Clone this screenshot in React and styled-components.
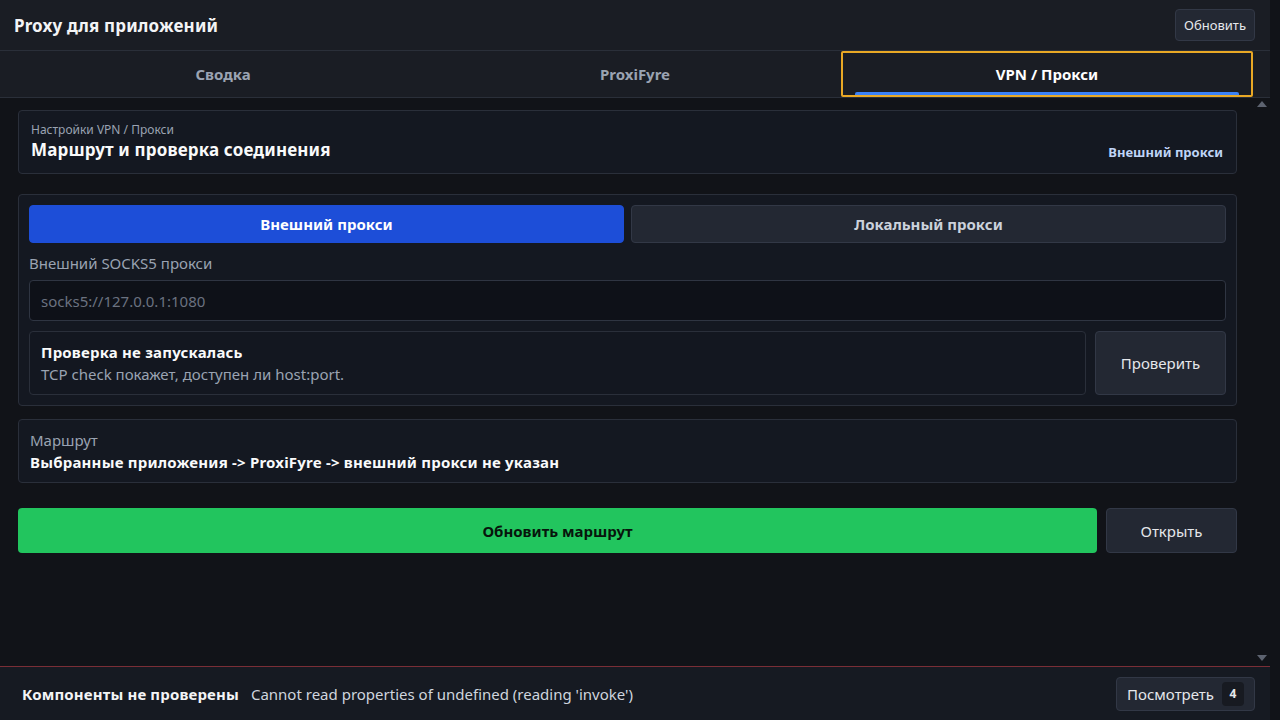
import React from 'react';
import styled, { createGlobalStyle } from 'styled-components';

const GlobalStyle = createGlobalStyle`
  html, body {
    margin: 0;
    padding: 0;
    background: #111318;
    font-family: "Noto Sans", "Open Sans", sans-serif;
    color: #e5e7eb;
  }
  * { box-sizing: border-box; }
`;

const Shell = styled.div`
  width: 1270px;
  height: 100vh;
  display: flex;
  flex-direction: column;
  background: #111318;
`;

const TopBar = styled.header`
  height: 51px;
  display: flex;
  align-items: center;
  justify-content: space-between;
  padding: 0 15px 0 14px;
  background: #1a1d24;
  border-bottom: 1px solid #2a2f39;
`;

const AppTitle = styled.h1`
  margin: 0;
  font-size: 17px;
  font-weight: 700;
  letter-spacing: 0.15px;
  color: #f3f4f6;
`;

const GhostButton = styled.button`
  font-family: inherit;
  font-size: ${(p) => p.$size || 15}px;
  color: #e5e7eb;
  background: #232833;
  border: 1px solid #323846;
  border-radius: 4px;
  height: ${(p) => p.$height || 32}px;
  width: ${(p) => (p.$width ? `${p.$width}px` : 'auto')};
  padding: 0 ${(p) => p.$padX || 10}px;
  display: inline-flex;
  align-items: center;
  justify-content: center;
  gap: 8px;
  flex-shrink: 0;
  cursor: pointer;
`;

const TabRow = styled.nav`
  height: 47px;
  display: grid;
  grid-template-columns: repeat(3, 1fr);
  padding: 0 17px;
  background: #1a1d24;
  border-bottom: 1px solid #2a2f39;
`;

const Tab = styled.button`
  position: relative;
  font-family: inherit;
  font-size: 15px;
  font-weight: 700;
  background: transparent;
  color: ${(p) => (p.$active ? '#ffffff' : '#9aa3b2')};
  border: 2px solid ${(p) => (p.$active ? '#e9a825' : 'transparent')};
  border-radius: 2px;
  cursor: pointer;

  &::after {
    content: '';
    display: ${(p) => (p.$active ? 'block' : 'none')};
    position: absolute;
    left: 12px;
    right: 12px;
    bottom: 0;
    height: 3px;
    background: #3b82f6;
    border-radius: 2px 2px 0 0;
  }
`;

const Body = styled.div`
  flex: 1;
  display: flex;
  min-height: 0;
`;

const Scroller = styled.main`
  flex: 1;
  padding: 12px 17px 0 18px;
  display: flex;
  flex-direction: column;
`;

const Gutter = styled.div`
  width: 16px;
  display: flex;
  flex-direction: column;
  justify-content: space-between;
  align-items: center;
  padding: 2px 0 4px;
`;

const Card = styled.section`
  background: #141821;
  border: 1px solid #2a2f3a;
  border-radius: 4px;
  padding: ${(p) => p.$pad || '10px'};
  margin-bottom: ${(p) => p.$after || 0}px;
`;

const HeadCard = styled(Card)`
  display: flex;
  align-items: flex-end;
  justify-content: space-between;
`;

const Eyebrow = styled.div`
  font-size: 12px;
  line-height: 16px;
  color: #9aa3b2;
`;

const CardTitle = styled.div`
  font-size: 17px;
  font-weight: 700;
  line-height: 24px;
  letter-spacing: 0.15px;
  color: #f9fafb;
`;

const ModeTag = styled.div`
  font-size: 13px;
  font-weight: 700;
  color: #bfd4f6;
  line-height: 20px;
`;

const Segments = styled.div`
  display: grid;
  grid-template-columns: 1fr 1fr;
  gap: 7px;
`;

const Segment = styled.button`
  height: 38px;
  font-family: inherit;
  font-size: 15px;
  font-weight: 700;
  border-radius: 4px;
  border: 1px solid ${(p) => (p.$on ? '#1d4ed8' : '#323846')};
  background: ${(p) => (p.$on ? '#1d4ed8' : '#232833')};
  color: ${(p) => (p.$on ? '#ffffff' : '#cbd2dc')};
  cursor: pointer;
`;

const FieldLabel = styled.label`
  display: block;
  margin: 10px 0 7px;
  font-size: 15px;
  line-height: 20px;
  color: #9aa3b2;
`;

const TextInput = styled.input`
  width: 100%;
  height: 41px;
  padding: 0 11px;
  font-family: inherit;
  font-size: 15px;
  color: #e5e7eb;
  background: #0e1118;
  border: 1px solid #2f3542;
  border-radius: 4px;
  outline: none;

  &::placeholder { color: #6b7280; }
`;

const StatusRow = styled.div`
  display: flex;
  gap: 9px;
  margin-top: 10px;
  height: 64px;
`;

const StatusBox = styled.div`
  flex: 1;
  padding: 9px 11px;
  background: #131720;
  border: 1px solid #2a2f3a;
  border-radius: 4px;
`;

const StrongLine = styled.div`
  font-size: 15px;
  font-weight: 700;
  line-height: 22px;
  letter-spacing: 0.2px;
  color: #f9fafb;
`;

const MutedLine = styled.div`
  font-size: 15px;
  line-height: 22px;
  color: #9aa3b2;
`;

const ActionRow = styled.div`
  display: flex;
  gap: 9px;
  height: 45px;
`;

const PrimaryButton = styled.button`
  flex: 1;
  font-family: inherit;
  font-size: 15px;
  font-weight: 700;
  color: #07150c;
  background: #22c55e;
  border: none;
  border-radius: 4px;
  cursor: pointer;
`;

const Footer = styled.footer`
  height: 54px;
  display: flex;
  align-items: center;
  gap: 12px;
  padding: 0 15px 0 22px;
  background: #161a22;
  border-top: 1px solid #7a2e36;
`;

const FooterTitle = styled.span`
  font-size: 15px;
  font-weight: 700;
  letter-spacing: 0.15px;
  color: #f3f4f6;
`;

const FooterMessage = styled.span`
  flex: 1;
  font-size: 15px;
  color: #cfd5de;
`;

const Count = styled.span`
  min-width: 22px;
  height: 24px;
  padding: 0 6px;
  display: inline-flex;
  align-items: center;
  justify-content: center;
  font-size: 12px;
  font-weight: 700;
  background: #171a21;
  border-radius: 4px;
`;

function Arrow({ down }) {
  return (
    <svg width="10" height="8" viewBox="0 0 10 8">
      <polygon points={down ? '0,1 10,1 5,7' : '0,7 10,7 5,1'} fill="#5d6370" />
    </svg>
  );
}

export default function App() {
  return (
    <>
      <GlobalStyle />
      <Shell>
        <TopBar>
          <AppTitle>Proxy для приложений</AppTitle>
          <GhostButton $size={13} $padX={8}>Обновить</GhostButton>
        </TopBar>
        <TabRow>
          <Tab>Сводка</Tab>
          <Tab>ProxiFyre</Tab>
          <Tab $active>VPN / Прокси</Tab>
        </TabRow>
        <Body>
          <Scroller>
            <HeadCard $pad="11px 13px 11px 12px" $after={20}>
              <div>
                <Eyebrow>Настройки VPN / Прокси</Eyebrow>
                <CardTitle>Маршрут и проверка соединения</CardTitle>
              </div>
              <ModeTag>Внешний прокси</ModeTag>
            </HeadCard>

            <Card $after={13}>
              <Segments>
                <Segment $on>Внешний прокси</Segment>
                <Segment>Локальный прокси</Segment>
              </Segments>
              <FieldLabel>Внешний SOCKS5 прокси</FieldLabel>
              <TextInput placeholder="socks5://127.0.0.1:1080" />
              <StatusRow>
                <StatusBox>
                  <StrongLine>Проверка не запускалась</StrongLine>
                  <MutedLine>TCP check покажет, доступен ли host:port.</MutedLine>
                </StatusBox>
                <GhostButton $width={131} $height={64}>Проверить</GhostButton>
              </StatusRow>
            </Card>

            <Card $pad="9px 11px" $after={25}>
              <MutedLine>Маршрут</MutedLine>
              <StrongLine>Выбранные приложения -&gt; ProxiFyre -&gt; внешний прокси не указан</StrongLine>
            </Card>

            <ActionRow>
              <PrimaryButton>Обновить маршрут</PrimaryButton>
              <GhostButton $width={131} $height={45}>Открыть</GhostButton>
            </ActionRow>
          </Scroller>
          <Gutter>
            <Arrow />
            <Arrow down />
          </Gutter>
        </Body>
        <Footer>
          <FooterTitle>Компоненты не проверены</FooterTitle>
          <FooterMessage>Cannot read properties of undefined (reading 'invoke')</FooterMessage>
          <GhostButton $height={34}>
            Посмотреть <Count>4</Count>
          </GhostButton>
        </Footer>
      </Shell>
    </>
  );
}
